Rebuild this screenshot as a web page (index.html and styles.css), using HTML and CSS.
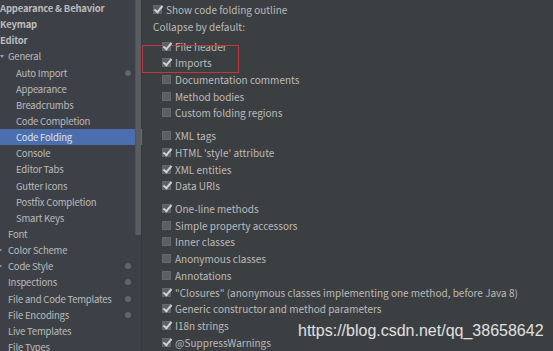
FILE: index.html
```html
<!DOCTYPE html>
<html lang="en">
<head>
    <meta charset="UTF-8">
    <title>Settings - Code Folding</title>
    <link rel="stylesheet" href="styles.css">
</head>
<body>
    <div class="window">
        <div class="sidebar">
            <ul class="tree">
                <li class="bold">Appearance &amp; Behavior</li>
                <li class="bold">Keymap</li>
                <li class="bold">Editor</li>
                <li class="lvl1 open">General</li>
                <li class="lvl2">Auto Import <span class="proj"></span></li>
                <li class="lvl2">Appearance</li>
                <li class="lvl2">Breadcrumbs</li>
                <li class="lvl2">Code Completion</li>
                <li class="lvl2 selected">Code Folding</li>
                <li class="lvl2">Console</li>
                <li class="lvl2">Editor Tabs</li>
                <li class="lvl2">Gutter Icons</li>
                <li class="lvl2">Postfix Completion</li>
                <li class="lvl2">Smart Keys</li>
                <li class="lvl1">Font</li>
                <li class="lvl1 closed">Color Scheme</li>
                <li class="lvl1 closed">Code Style <span class="proj"></span></li>
                <li class="lvl1">Inspections <span class="proj"></span></li>
                <li class="lvl1">File and Code Templates <span class="proj"></span></li>
                <li class="lvl1">File Encodings <span class="proj"></span></li>
                <li class="lvl1">Live Templates</li>
                <li class="lvl1">File Types</li>
            </ul>
            <div class="scrollbar"><div class="thumb"></div></div>
        </div>

        <div class="content">
            <label class="opt top"><span class="box checked"></span>Show code folding outline</label>
            <div class="caption">Collapse by default:</div>

            <div class="group highlight-wrap">
                <div class="highlight"></div>
                <label class="opt"><span class="box checked"></span>File header</label>
                <label class="opt"><span class="box checked"></span>Imports</label>
                <label class="opt"><span class="box"></span>Documentation comments</label>
                <label class="opt"><span class="box"></span>Method bodies</label>
                <label class="opt"><span class="box"></span>Custom folding regions</label>
            </div>

            <div class="group">
                <label class="opt"><span class="box"></span>XML tags</label>
                <label class="opt"><span class="box checked"></span>HTML 'style' attribute</label>
                <label class="opt"><span class="box checked"></span>XML entities</label>
                <label class="opt"><span class="box checked"></span>Data URIs</label>
            </div>

            <div class="group">
                <label class="opt"><span class="box checked"></span>One-line methods</label>
                <label class="opt"><span class="box"></span>Simple property accessors</label>
                <label class="opt"><span class="box"></span>Inner classes</label>
                <label class="opt"><span class="box"></span>Anonymous classes</label>
                <label class="opt"><span class="box"></span>Annotations</label>
                <label class="opt"><span class="box checked"></span>"Closures" (anonymous classes implementing one method, before Java 8)</label>
                <label class="opt"><span class="box checked"></span>Generic constructor and method parameters</label>
                <label class="opt"><span class="box checked"></span>I18n strings</label>
                <label class="opt"><span class="box checked"></span>@SuppressWarnings</label>
            </div>

            <div class="watermark">https://blog.csdn.net/qq_38658642</div>
        </div>
    </div>
</body>
</html>
```

FILE: styles.css
```css
html, body {
    margin: 0;
    padding: 0;
}
body {
    font-family: "Noto Sans CJK SC", "Liberation Sans", sans-serif;
    font-size: 10px;
    color: #bbbbbb;
    background-color: #3c3f41;
    overflow: hidden;
}
.window {
    display: flex;
    width: 553px;
    height: 351px;
}

/* left settings tree */
.sidebar {
    display: flex;
    width: 142px;
    flex-shrink: 0;
    background-color: #3d4147;
    border-right: 1px solid #35383a;
    box-sizing: border-box;
}
.tree {
    list-style: none;
    margin: 0;
    padding: 0;
    flex: 1;
    min-width: 0;
    font-size: 9.5px;
    letter-spacing: -0.2px;
}
.tree li {
    position: relative;
    height: 16.15px;
    line-height: 16.15px;
    white-space: nowrap;
}
.tree .bold {
    font-weight: bold;
    padding-left: 0;
}
.tree .lvl1 {
    padding-left: 8px;
}
.tree .lvl2 {
    padding-left: 16px;
}
.tree .open::before,
.tree .closed::before {
    content: "";
    position: absolute;
    left: 0;
    top: 7px;
    border-style: solid;
    border-color: transparent;
}
.tree .open::before {
    border-width: 3px 2px 0 2px;
    border-top-color: #a0a0a0;
}
.tree .closed::before {
    top: 6px;
    left: -1px;
    border-width: 2px 0 2px 3px;
    border-left-color: #a0a0a0;
}
.tree .selected {
    background-color: #4b6eaf;
    color: #dfe4ee;
    margin-right: -7px;
}
.proj {
    position: absolute;
    right: 4px;
    top: 5px;
    width: 6px;
    height: 6px;
    border-radius: 50%;
    background-color: #62666b;
}
.scrollbar {
    width: 6px;
    flex-shrink: 0;
    position: relative;
}
.thumb {
    height: 235px;
    background-color: #595d62;
    border-left: 1px solid #50545a;
    box-sizing: border-box;
}

/* right options panel */
.content {
    position: relative;
    flex: 1;
    padding: 1px 0 0 11px;
}
.opt {
    display: flex;
    align-items: center;
    height: 16.7px;
    padding-left: 9px;
    white-space: nowrap;
}
.opt.top {
    padding-left: 0;
}
.caption {
    height: 18px;
    line-height: 18px;
    margin-bottom: 2px;
}
.group {
    margin-bottom: 6.2px;
}
.highlight-wrap {
    position: relative;
}
.highlight {
    position: absolute;
    left: -11px;
    top: 7px;
    width: 95px;
    height: 26px;
    border: 1px solid #c0393b;
}
.box {
    position: relative;
    width: 9px;
    height: 9px;
    margin-right: 4px;
    background-color: #5d6062;
    border: 1px solid #66696b;
    box-sizing: border-box;
    flex-shrink: 0;
}
.box.checked::after {
    content: "";
    position: absolute;
    left: 2px;
    top: -2px;
    width: 3px;
    height: 7px;
    border-right: 2px solid #d0d0d0;
    border-bottom: 2px solid #d0d0d0;
    transform: rotate(40deg);
}
.watermark {
    position: absolute;
    left: 156px;
    top: 322px;
    font-family: "Liberation Sans", Arial, sans-serif;
    font-size: 16px;
    letter-spacing: 0;
    color: #e0e0e0;
    white-space: nowrap;
}
```
